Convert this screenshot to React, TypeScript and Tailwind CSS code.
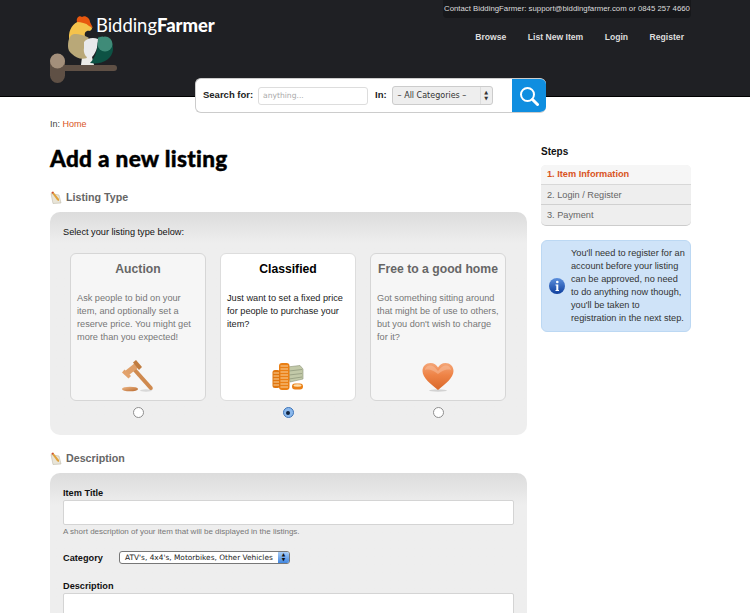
const Logo = () => (
  <svg width="72" height="74" viewBox="48 10 72 74" className="shrink-0">
    <rect x="58" y="63" width="59" height="6" rx="3" fill="#5f5045" />
    <rect x="50" y="52" width="15" height="29" rx="7.5" fill="#5f5045" />
    <circle cx="57.5" cy="59" r="7.5" fill="#a38f7b" />
    <path d="M82 55 L92 55 L94 63 L81 63 Z" fill="#ecebe8" />
    <path d="M69 33 C70 24 76 18 84 19 C89 20 92 24 92 27 L90 29 C86 28 84 31 85 34 L76 40 L69 40 Z" fill="#f4c34c" />
    <path d="M77 20 C76 16 79 13 82 15 C85 13 90 16 90 20 L93 26 L89 24 C86 21 81 20 77 20 Z" fill="#e8580f" />
    <path d="M68 44 C68 37 70 33 74 32 C80 32 86 34 89 36 C84 40 84 48 87 56 C82 58 76 56 72 52 C69 50 68 47 68 44 Z" fill="#b9a878" />
    <path d="M84 40 C87 36 93 35 98 37 C98 45 96 52 90 57 C86 56 83 51 84 46 Z" fill="#e9eaec" />
    <path d="M98 35 C107 33 114 40 113 48 C112 57 102 63 90 61 C96 55 98 47 98 35 Z" fill="#0d5244" />
    <circle cx="105" cy="42" r="7.5" fill="#3f8b78" />
    <path d="M98 36 A8 8 0 0 1 103 34.5 L99 47 Z" fill="#3f8b78" />
  </svg>
);

const Pencil = () => (
  <svg width="12" height="13" viewBox="0 0 12 13" className="shrink-0">
    <path d="M1 2.5 L9 4 L11 12 L3 12.5 Z" fill="#e9e5d8" stroke="#b7b1a0" strokeWidth="0.5" />
    <path d="M1.5 1.5 L3 0.5 L9 8 L9 10 L7.2 9.2 Z" fill="#e0a23c" />
    <path d="M1.5 1.5 L3 0.5 L3.8 1.5 L2.2 2.7 Z" fill="#c9483a" />
  </svg>
);

const Gavel = () => (
  <svg width="32" height="32" viewBox="0 0 32 32">
    <defs>
      <linearGradient id="gv" x1="0" y1="0" x2="1" y2="1">
        <stop offset="0" stopColor="#eeb98a" />
        <stop offset="1" stopColor="#b9692c" />
      </linearGradient>
    </defs>
    <ellipse cx="24" cy="30.5" rx="6" ry="1.2" fill="#d8d8d8" />
    <ellipse cx="8" cy="29" rx="8" ry="2.3" fill="url(#gv)" />
    <path d="M11 11 L14 8.5 L30.5 27 C31.5 29.5 29.5 31 27.5 29.5 Z" fill="#cf8a4f" />
    <path d="M3 11 L13 3 L17 7 L7 15 Z" fill="#dfa06a" />
    <path d="M11 2.5 L14 0 L20 7 L17 10 Z" fill="#c07c40" />
    <path d="M0 12.5 L2.5 9.5 L9 16 L6.5 18.5 Z" fill="#e2a26c" />
  </svg>
);

const Coins = () => (
  <svg width="32" height="30" viewBox="0 0 32 30">
    <path d="M15 5 L28 3.5 L31 7 L31 17 L18 20 Z" fill="#c2c9a8" stroke="#8b9478" strokeWidth="0.6" />
    <path d="M17 9 L30 7.5 M17 13 L30 11.5 M17 17 L30 15" stroke="#8b9478" strokeWidth="0.7" />
    <rect x="7" y="1" width="10.5" height="27" rx="3" fill="#ea7f14" />
    <path d="M8.5 4 H16 M8.5 7 H16 M8.5 10 H16 M8.5 13 H16 M8.5 16 H16 M8.5 19 H16 M8.5 22 H16 M8.5 25 H16" stroke="#fbd29c" strokeWidth="1" />
    <rect x="0.5" y="8" width="7.5" height="18" rx="2.5" fill="#e0760f" />
    <path d="M1.5 11 H7 M1.5 14 H7 M1.5 17 H7 M1.5 20 H7 M1.5 23 H7" stroke="#fbd29c" strokeWidth="1" />
    <rect x="20" y="21.5" width="11" height="6" rx="3" fill="#ea7f14" />
    <ellipse cx="25.5" cy="23.5" rx="4" ry="1.2" fill="#fde0b0" />
  </svg>
);

const Heart = () => (
  <svg width="32" height="30" viewBox="0 0 32 30">
    <defs>
      <linearGradient id="ht" x1="0" y1="0" x2="0" y2="1">
        <stop offset="0" stopColor="#f4a678" />
        <stop offset="0.45" stopColor="#ee8346" />
        <stop offset="1" stopColor="#d9682a" />
      </linearGradient>
    </defs>
    <ellipse cx="16" cy="28.5" rx="9" ry="1.2" fill="#d2d2d2" />
    <path d="M16 28 C9 22 0.5 16 0.5 9 C0.5 4 4 1 8.5 1 C12 1 14.5 3 16 5.5 C17.5 3 20 1 23.5 1 C28 1 31.5 4 31.5 9 C31.5 16 23 22 16 28 Z" fill="url(#ht)" />
    <path d="M3 8 C3 5 6 3 9 3.5 C12 4 14 6.5 16 9 C18 6.5 20 4 23 3.5 C26 3 29 5 29 8 C25 6.5 20 9 16 12 C12 9 7 6.5 3 8 Z" fill="#f7bd9a" opacity="0.55" />
  </svg>
);

const Radio = ({ on }: { on?: boolean }) =>
  on ? (
    <span className="flex h-[11px] w-[11px] items-center justify-center rounded-full border border-[#3f74b8] bg-[#8ab8ec]">
      <span className="block h-[4px] w-[4px] rounded-full bg-[#10233f]" />
    </span>
  ) : (
    <span className="block h-[11px] w-[11px] rounded-full border-[1.5px] border-[#8e8e8e] bg-white" />
  );

const cards = [
  {
    title: "Auction",
    text: "Ask people to bid on your item, and optionally set a reserve price. You might get more than you expected!",
    icon: <Gavel />,
  },
  {
    title: "Classified",
    text: "Just want to set a fixed price for people to purchase your item?",
    icon: <Coins />,
    active: true,
  },
  {
    title: "Free to a good home",
    text: "Got something sitting around that might be of use to others, but you don't wish to charge for it?",
    icon: <Heart />,
  },
];

export default function App() {
  return (
    <div className="h-[613px] w-[750px] overflow-hidden bg-white font-['Liberation_Sans',Arial,sans-serif] text-[9.2px] text-[#222]">
      <header className="flex h-[97px] border-b border-black bg-[#1f2024] pl-[48px] pr-[59px]">
        <div className="flex items-start pt-[12px]">
          <Logo />
          <span className="-ml-[24px] mt-[1px] font-['Lato',sans-serif] text-[18.4px] leading-[24px] text-white">
            Bidding<b className="font-black">Farmer</b>
          </span>
        </div>
        <div className="ml-auto flex flex-col items-end">
          <div className="flex h-[18px] w-[248px] items-center justify-center whitespace-nowrap rounded-b-[4px] bg-[#17181b] text-[7.8px] text-[#ddd]">
            Contact BiddingFarmer: support@biddingfarmer.com or 0845 257 4660
          </div>
          <nav className="mr-[7px] mt-[13px] flex gap-[21.5px] text-[8.6px] font-bold text-[#ddd]">
            <span>Browse</span>
            <span>List New Item</span>
            <span>Login</span>
            <span>Register</span>
          </nav>
        </div>
      </header>

      <div className="relative z-10 ml-[195px] -mt-[19px] flex h-[35px] w-[351px] overflow-hidden rounded-[6px] border border-r-0 border-[#ccc] bg-white">
        <div className="flex flex-1 items-center pl-[7px]">
          <span className="w-[55px] shrink-0 whitespace-nowrap text-[9.5px] font-bold text-[#222]">Search for:</span>
          <span className="flex h-[18px] w-[110px] items-center rounded-[3px] border border-[#ddd] pl-[4px] font-['DejaVu_Sans',sans-serif] text-[7.6px] text-[#aaa]">
            anything...
          </span>
          <span className="ml-[7px] text-[9.5px] font-bold text-[#222]">In:</span>
          <span className="ml-[5px] flex h-[19px] w-[101px] items-center rounded-[3px] border border-[#ccc] bg-[#eee] font-['DejaVu_Sans',sans-serif] text-[8px] text-[#333]">
            <span className="flex-1 whitespace-nowrap pl-[5px]">– All Categories –</span>
            <span className="flex h-full w-[12px] flex-col items-center justify-center gap-[1px] border-l border-[#ddd] text-[5px] leading-[5px]">
              <span>▲</span>
              <span>▼</span>
            </span>
          </span>
        </div>
        <div className="flex w-[34px] items-center justify-center bg-[#0f8ee0]">
          <svg width="20" height="20" viewBox="0 0 20 20" fill="none" stroke="white">
            <circle cx="8.5" cy="8.5" r="6.5" strokeWidth="2" />
            <path d="M13.5 13.5 L18.5 18.5" strokeWidth="3" strokeLinecap="round" />
          </svg>
        </div>
      </div>

      <div className="mt-[5px] flex gap-[14px] pl-[50px]">
        <main className="w-[477px]">
          <p className="text-[9px] leading-[12px] text-[#444]">
            In: <span className="text-[#d9541e]">Home</span>
          </p>
          <h1 className="mt-[16px] font-['Lato',sans-serif] text-[22.6px] font-black leading-[26px] tracking-[0.3px] text-black [-webkit-text-stroke:0.4px_black]">
            Add a new listing
          </h1>

          <h2 className="mt-[18px] flex items-center gap-[4px] text-[10.7px] font-bold leading-[14px] text-[#666]">
            <Pencil /> Listing Type
          </h2>
          <section className="mt-[8px] h-[223px] rounded-[10px] bg-gradient-to-b from-[#dcdcdc] to-[#eeeeee] to-[14%] px-[13px] pt-[14px]">
            <p className="leading-[12px] text-[#111]">Select your listing type below:</p>
            <div className="ml-[7px] mt-[15px] flex gap-[14px]">
              {cards.map((c) => (
                <div key={c.title} className="flex w-[136px] flex-col items-center">
                  <div
                    className={
                      c.active
                        ? "flex h-[148px] w-full flex-col rounded-[6px] border border-[#ddd] bg-white px-[6px] text-[#222]"
                        : "flex h-[148px] w-full flex-col rounded-[6px] border border-[#d6d6d6] bg-[#f6f6f6] px-[6px] text-[#777]"
                    }
                  >
                    <h3
                      className={
                        c.active
                          ? "mt-[8px] whitespace-nowrap text-center text-[12.2px] font-bold leading-[14px] text-black"
                          : "mt-[8px] whitespace-nowrap text-center text-[12.2px] font-bold leading-[14px] text-[#666]"
                      }
                    >
                      {c.title}
                    </h3>
                    <p className="mt-[16px] text-[9.2px] leading-[13px]">{c.text}</p>
                    <div className="mb-[8px] mt-auto flex justify-center">{c.icon}</div>
                  </div>
                  <div className="mt-[6px]">
                    <Radio on={c.active} />
                  </div>
                </div>
              ))}
            </div>
          </section>

          <h2 className="mt-[16px] flex items-center gap-[4px] text-[10.7px] font-bold leading-[14px] text-[#666]">
            <Pencil /> Description
          </h2>
          <section className="mt-[8px] h-[200px] rounded-[10px] bg-gradient-to-b from-[#dcdcdc] to-[#eeeeee] to-[16%] px-[13px] pt-[14px]">
            <label className="block text-[9.2px] font-bold leading-[12px] text-[#111]">Item Title</label>
            <div className="mt-[1px] h-[25px] w-[451px] rounded-[2px] border border-[#d4d4d4] bg-white" />
            <p className="mt-[2px] text-[8px] leading-[10px] text-[#777]">
              A short description of your item that will be displayed in the listings.
            </p>
            <div className="mt-[14px] flex items-center">
              <label className="w-[56px] text-[9.2px] font-bold leading-[12px] text-[#111]">Category</label>
              <span className="flex h-[13px] w-[171px] items-center overflow-hidden rounded-[3px] border border-[#777] bg-white font-['DejaVu_Sans',sans-serif] text-[7.4px] text-[#222]">
                <span className="flex-1 whitespace-nowrap pl-[5px]">ATV's, 4x4's, Motorbikes, Other Vehicles</span>
                <span className="flex h-full w-[11px] flex-col items-center justify-center bg-gradient-to-b from-[#a9cdf5] to-[#3f86e0] text-[4.5px] leading-[4.5px] text-[#111]">
                  <span>▲</span>
                  <span>▼</span>
                </span>
              </span>
            </div>
            <label className="mt-[16px] block text-[9.2px] font-bold leading-[12px] text-[#111]">Description</label>
            <div className="mt-[1px] h-[60px] w-[451px] rounded-[2px] border border-[#d4d4d4] bg-white" />
          </section>
        </main>

        <aside className="mt-[28px] w-[150px]">
          <h4 className="text-[10px] font-bold leading-[12px] text-[#111]">Steps</h4>
          <ol className="mt-[7px] overflow-hidden rounded-[5px] border-b border-[#ccc] bg-[#eee] text-[9.2px] text-[#666]">
            <li className="flex h-[20px] items-center border-b border-[#d8d8d8] bg-[#f6f6f6] pl-[6px] font-bold text-[#d9541e]">
              1. Item Information
            </li>
            <li className="flex h-[20px] items-center border-b border-[#d0d0d0] pl-[6px] pt-[2px]">2. Login / Register</li>
            <li className="flex h-[20px] items-center pl-[6px] pt-[2px]">3. Payment</li>
          </ol>
          <div className="mt-[14px] flex h-[92px] items-center rounded-[6px] border border-[#bcd8f3] bg-[#cfe3f8] pl-[7px] text-[9.2px] leading-[13px] text-[#333]">
            <svg width="16" height="16" viewBox="0 0 16 16" className="shrink-0">
              <defs>
                <linearGradient id="inf" x1="0" y1="0" x2="0" y2="1">
                  <stop offset="0" stopColor="#5c8fdc" />
                  <stop offset="1" stopColor="#0f3f9e" />
                </linearGradient>
              </defs>
              <circle cx="8" cy="8" r="8" fill="url(#inf)" />
              <circle cx="8.3" cy="4" r="1.3" fill="white" />
              <path d="M6.5 6.5 H9.3 V12 H10 V13 H6.5 V12 H7.3 V7.5 H6.5 Z" fill="white" />
            </svg>
            <p className="ml-[6px] w-[118px]">
              You'll need to register for an
              <br />
              account before your listing
              <br />
              can be approved, no need
              <br />
              to do anything now though,
              <br />
              you'll be taken to
              <br />
              registration in the next step.
            </p>
          </div>
        </aside>
      </div>
    </div>
  );
}
